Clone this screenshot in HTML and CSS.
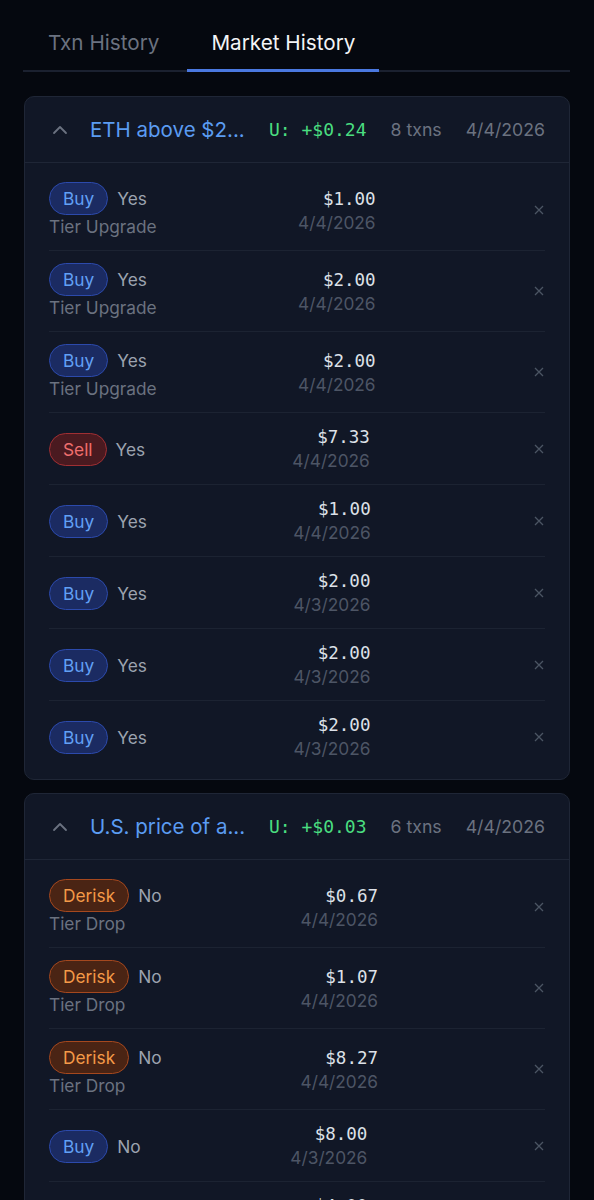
FILE: index.html
```html
<!DOCTYPE html>
<html lang="en">
<head>
  <meta charset="UTF-8">
  <title>Market History</title>
  <link rel="stylesheet" href="styles.css">
</head>
<body>

  <div class="pagina">
    <div class="abas">
      <div class="aba">Txn History</div>
      <div class="aba ativa">Market History</div>
    </div>

    <div class="mercado">
      <div class="cabecalho">
        <svg class="seta" width="16" height="16" viewBox="0 0 16 16"><polyline points="2,11 8,5 14,11" fill="none" stroke="currentColor" stroke-width="1.8" stroke-linecap="round" stroke-linejoin="round"/></svg>
        <div class="titulo">ETH above $2...</div>
        <div class="lucro">U: +$0.24</div>
        <div class="contagem">8 txns</div>
        <div class="dia">4/4/2026</div>
      </div>
      <div class="linhas">
        <div class="linha">
          <div class="lado">
            <div class="topo"><span class="etiqueta buy">Buy</span><span class="escolha">Yes</span></div>
            <div class="motivo">Tier Upgrade</div>
          </div>
          <div class="valor"><div class="montante">$1.00</div><div class="data">4/4/2026</div></div>
          <button class="remover"><svg width="10" height="10" viewBox="0 0 10 10"><path d="M1 1L9 9M9 1L1 9" stroke="currentColor" stroke-width="1.3"/></svg></button>
        </div>
        <div class="linha">
          <div class="lado">
            <div class="topo"><span class="etiqueta buy">Buy</span><span class="escolha">Yes</span></div>
            <div class="motivo">Tier Upgrade</div>
          </div>
          <div class="valor"><div class="montante">$2.00</div><div class="data">4/4/2026</div></div>
          <button class="remover"><svg width="10" height="10" viewBox="0 0 10 10"><path d="M1 1L9 9M9 1L1 9" stroke="currentColor" stroke-width="1.3"/></svg></button>
        </div>
        <div class="linha">
          <div class="lado">
            <div class="topo"><span class="etiqueta buy">Buy</span><span class="escolha">Yes</span></div>
            <div class="motivo">Tier Upgrade</div>
          </div>
          <div class="valor"><div class="montante">$2.00</div><div class="data">4/4/2026</div></div>
          <button class="remover"><svg width="10" height="10" viewBox="0 0 10 10"><path d="M1 1L9 9M9 1L1 9" stroke="currentColor" stroke-width="1.3"/></svg></button>
        </div>
        <div class="linha">
          <div class="lado">
            <div class="topo"><span class="etiqueta sell">Sell</span><span class="escolha">Yes</span></div>
          </div>
          <div class="valor"><div class="montante">$7.33</div><div class="data">4/4/2026</div></div>
          <button class="remover"><svg width="10" height="10" viewBox="0 0 10 10"><path d="M1 1L9 9M9 1L1 9" stroke="currentColor" stroke-width="1.3"/></svg></button>
        </div>
        <div class="linha">
          <div class="lado">
            <div class="topo"><span class="etiqueta buy">Buy</span><span class="escolha">Yes</span></div>
          </div>
          <div class="valor"><div class="montante">$1.00</div><div class="data">4/4/2026</div></div>
          <button class="remover"><svg width="10" height="10" viewBox="0 0 10 10"><path d="M1 1L9 9M9 1L1 9" stroke="currentColor" stroke-width="1.3"/></svg></button>
        </div>
        <div class="linha">
          <div class="lado">
            <div class="topo"><span class="etiqueta buy">Buy</span><span class="escolha">Yes</span></div>
          </div>
          <div class="valor"><div class="montante">$2.00</div><div class="data">4/3/2026</div></div>
          <button class="remover"><svg width="10" height="10" viewBox="0 0 10 10"><path d="M1 1L9 9M9 1L1 9" stroke="currentColor" stroke-width="1.3"/></svg></button>
        </div>
        <div class="linha">
          <div class="lado">
            <div class="topo"><span class="etiqueta buy">Buy</span><span class="escolha">Yes</span></div>
          </div>
          <div class="valor"><div class="montante">$2.00</div><div class="data">4/3/2026</div></div>
          <button class="remover"><svg width="10" height="10" viewBox="0 0 10 10"><path d="M1 1L9 9M9 1L1 9" stroke="currentColor" stroke-width="1.3"/></svg></button>
        </div>
        <div class="linha">
          <div class="lado">
            <div class="topo"><span class="etiqueta buy">Buy</span><span class="escolha">Yes</span></div>
          </div>
          <div class="valor"><div class="montante">$2.00</div><div class="data">4/3/2026</div></div>
          <button class="remover"><svg width="10" height="10" viewBox="0 0 10 10"><path d="M1 1L9 9M9 1L1 9" stroke="currentColor" stroke-width="1.3"/></svg></button>
        </div>
      </div>
    </div>

    <div class="mercado">
      <div class="cabecalho">
        <svg class="seta" width="16" height="16" viewBox="0 0 16 16"><polyline points="2,11 8,5 14,11" fill="none" stroke="currentColor" stroke-width="1.8" stroke-linecap="round" stroke-linejoin="round"/></svg>
        <div class="titulo">U.S. price of a...</div>
        <div class="lucro">U: +$0.03</div>
        <div class="contagem">6 txns</div>
        <div class="dia">4/4/2026</div>
      </div>
      <div class="linhas">
        <div class="linha">
          <div class="lado">
            <div class="topo"><span class="etiqueta derisk">Derisk</span><span class="escolha">No</span></div>
            <div class="motivo">Tier Drop</div>
          </div>
          <div class="valor"><div class="montante">$0.67</div><div class="data">4/4/2026</div></div>
          <button class="remover"><svg width="10" height="10" viewBox="0 0 10 10"><path d="M1 1L9 9M9 1L1 9" stroke="currentColor" stroke-width="1.3"/></svg></button>
        </div>
        <div class="linha">
          <div class="lado">
            <div class="topo"><span class="etiqueta derisk">Derisk</span><span class="escolha">No</span></div>
            <div class="motivo">Tier Drop</div>
          </div>
          <div class="valor"><div class="montante">$1.07</div><div class="data">4/4/2026</div></div>
          <button class="remover"><svg width="10" height="10" viewBox="0 0 10 10"><path d="M1 1L9 9M9 1L1 9" stroke="currentColor" stroke-width="1.3"/></svg></button>
        </div>
        <div class="linha">
          <div class="lado">
            <div class="topo"><span class="etiqueta derisk">Derisk</span><span class="escolha">No</span></div>
            <div class="motivo">Tier Drop</div>
          </div>
          <div class="valor"><div class="montante">$8.27</div><div class="data">4/4/2026</div></div>
          <button class="remover"><svg width="10" height="10" viewBox="0 0 10 10"><path d="M1 1L9 9M9 1L1 9" stroke="currentColor" stroke-width="1.3"/></svg></button>
        </div>
        <div class="linha">
          <div class="lado">
            <div class="topo"><span class="etiqueta buy">Buy</span><span class="escolha">No</span></div>
          </div>
          <div class="valor"><div class="montante">$8.00</div><div class="data">4/3/2026</div></div>
          <button class="remover"><svg width="10" height="10" viewBox="0 0 10 10"><path d="M1 1L9 9M9 1L1 9" stroke="currentColor" stroke-width="1.3"/></svg></button>
        </div>
        <div class="linha">
          <div class="lado">
            <div class="topo"><span class="etiqueta buy">Buy</span><span class="escolha">No</span></div>
          </div>
          <div class="valor"><div class="montante">$4.00</div><div class="data">4/3/2026</div></div>
          <button class="remover"><svg width="10" height="10" viewBox="0 0 10 10"><path d="M1 1L9 9M9 1L1 9" stroke="currentColor" stroke-width="1.3"/></svg></button>
        </div>
        <div class="linha">
          <div class="lado">
            <div class="topo"><span class="etiqueta buy">Buy</span><span class="escolha">No</span></div>
          </div>
          <div class="valor"><div class="montante">$2.00</div><div class="data">4/3/2026</div></div>
          <button class="remover"><svg width="10" height="10" viewBox="0 0 10 10"><path d="M1 1L9 9M9 1L1 9" stroke="currentColor" stroke-width="1.3"/></svg></button>
        </div>
      </div>
    </div>
  </div>

</body>
</html>
```

FILE: styles.css
```css
body {
  margin: 0;
  background-color: #05080f;
  font-family: Inter, "Noto Sans", sans-serif;
  color: #e5e7eb;
}

.pagina {
  padding: 0 24px 40px 23px;
}

.abas {
  display: flex;
  gap: 4px;
  padding-top: 31px;
  border-bottom: 2px solid #1b2130;
}

.aba {
  padding: 0 24px 14px 25px;
  font-size: 20.7px;
  line-height: 24px;
  color: #6b7280;
  border-bottom: 3px solid transparent;
  margin-bottom: -2px;
}

.aba.ativa {
  padding-left: 24px;
  color: #f3f4f6;
  border-bottom-color: #4a78e0;
}

.mercado {
  margin: 24px 0 0 1px;
  background-color: #111726;
  border: 1px solid #1f2636;
  border-radius: 10px;
}

.mercado + .mercado {
  margin-top: 13px;
}

.cabecalho {
  display: flex;
  align-items: center;
  gap: 24px;
  height: 65px;
  padding: 0 24px 0 27px;
  border-bottom: 1px solid #1f2636;
}

.seta {
  color: #6b7280;
  flex-shrink: 0;
  margin-right: -2px;
}

.titulo {
  flex: 1;
  min-width: 0;
  white-space: nowrap;
  overflow: hidden;
  font-size: 20.5px;
  color: #5b9cf2;
}

.lucro {
  font-family: "DejaVu Sans Mono", monospace;
  font-size: 18px;
  color: #4ade80;
  white-space: nowrap;
}

.contagem, .dia {
  font-size: 17.7px;
  color: #6b7280;
  white-space: nowrap;
}

.linhas {
  padding: 7px 24px;
}

.linha {
  display: flex;
  align-items: center;
  justify-content: space-between;
  padding: 12px 0 11px;
  border-bottom: 1px solid #1c2332;
}

.linha:last-child {
  border-bottom: none;
}

.topo {
  display: flex;
  align-items: center;
  gap: 9px;
}

.etiqueta {
  display: inline-block;
  padding: 4px 13px;
  border: 1px solid;
  border-radius: 999px;
  font-size: 17.3px;
  line-height: 23px;
}

.buy {
  background-color: #1b2b62;
  border-color: #2c4aac;
  color: #62a0f6;
}

.sell {
  background-color: #4a1a20;
  border-color: #a02f33;
  color: #f06e6e;
}

.derisk {
  background-color: #4a2414;
  border-color: #a5481e;
  color: #f59a48;
}

.escolha {
  font-size: 17.3px;
  color: #9ca3af;
}

.motivo {
  font-size: 17.3px;
  line-height: 24px;
  color: #6b7280;
}

.valor {
  text-align: right;
}

.montante {
  font-family: "DejaVu Sans Mono", monospace;
  font-size: 17.5px;
  line-height: 24px;
  color: #dde1e8;
}

.data {
  font-size: 17.3px;
  line-height: 24px;
  color: #4d5565;
}

.remover {
  width: 28px;
  padding: 0 1px 0 0;
  background: none;
  border: none;
  color: #4b5563;
  text-align: right;
  cursor: pointer;
}
```
